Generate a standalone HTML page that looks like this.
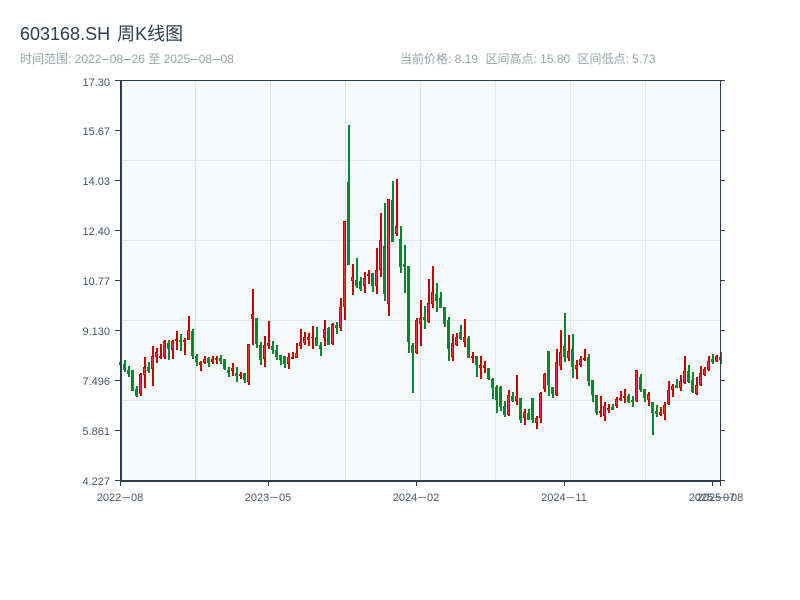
<!DOCTYPE html>
<html><head><meta charset="utf-8"><style>
html,body{margin:0;padding:0;background:#fff;width:800px;height:600px;overflow:hidden}
svg{display:block}
text{font-family:"Liberation Sans","WenQuanYi Zen Hei","Noto Sans CJK SC",sans-serif}
.h{font-size:13.5px;letter-spacing:.4px}
.t{font-size:14px;letter-spacing:1px;fill-opacity:.75}
</style></head><body>
<svg id="s" width="800" height="600" viewBox="0 0 800 600" xmlns="http://www.w3.org/2000/svg">
<text x="20" y="40" font-size="18" fill="#2c3e50">603168.SH <tspan dx="2">周K线图</tspan></text>
<text x="20" y="63" font-size="12" fill="#95a5a6">时间范围: 2022<tspan class="h" dx=".5">–</tspan>08<tspan class="h" dx=".5">–</tspan>26 至 2025<tspan class="h" dx=".5">–</tspan>08<tspan class="h" dx=".5">–</tspan>08</text>
<text x="400" y="63" font-size="12" fill="#95a5a6">当前价格: 8.19</text>
<text x="485.5" y="63" font-size="12" fill="#95a5a6">区间高点: 15.80</text>
<text x="577.5" y="63" font-size="12" fill="#95a5a6">区间低点: 5.73</text>
<rect x="120" y="80" width="600" height="400" fill="#f8f9fa"/>
<g fill="#e2e5e9">
<rect x="195" y="80" width="1" height="400"/><rect x="270" y="80" width="1" height="400"/><rect x="345" y="80" width="1" height="400"/><rect x="420" y="80" width="1" height="400"/><rect x="495" y="80" width="1" height="400"/><rect x="570" y="80" width="1" height="400"/><rect x="645" y="80" width="1" height="400"/>
<rect x="120" y="160" width="600" height="1"/><rect x="120" y="240" width="600" height="1"/><rect x="120" y="320" width="600" height="1"/><rect x="120" y="400" width="600" height="1"/>
</g>
<g id="c"></g>
<g fill="#2c3e50">
<rect x="120" y="80" width="2" height="401"/><rect x="120" y="480" width="601" height="2"/><rect x="120" y="80" width="601" height="1"/><rect x="720" y="80" width="1" height="401"/>
<rect x="115" y="80" width="5" height="1"/><rect x="115" y="130" width="5" height="1"/><rect x="115" y="180" width="5" height="1"/><rect x="115" y="230" width="5" height="1"/><rect x="115" y="280" width="5" height="1"/><rect x="115" y="330" width="5" height="1"/><rect x="115" y="380" width="5" height="1"/><rect x="115" y="430" width="5" height="1"/><rect x="115" y="480" width="5" height="1"/>
<rect x="720" y="80" width="5" height="1"/><rect x="720" y="130" width="5" height="1"/><rect x="720" y="180" width="5" height="1"/><rect x="720" y="230" width="5" height="1"/><rect x="720" y="280" width="5" height="1"/><rect x="720" y="330" width="5" height="1"/><rect x="720" y="380" width="5" height="1"/><rect x="720" y="430" width="5" height="1"/><rect x="720" y="480" width="5" height="1"/>
<rect x="120" y="480" width="1" height="6"/><rect x="268" y="480" width="1" height="6"/><rect x="416" y="480" width="1" height="6"/><rect x="564" y="480" width="1" height="6"/><rect x="712" y="480" width="1" height="6"/><rect x="720" y="480" width="1" height="6"/>
</g>
<g font-size="11" fill="#465666" text-anchor="end">
<text x="110" y="86">17.30</text><text x="110" y="135">15.67</text><text x="110" y="185">14.03</text><text x="110" y="235">12.40</text><text x="110" y="285">10.77</text><text x="110" y="335">9.130</text><text x="110" y="385">7.496</text><text x="110" y="435">5.861</text><text x="110" y="485">4.227</text>
</g>
<g font-size="11" fill="#465666" text-anchor="middle">
<text x="120" y="501">2022<tspan class="t" dx="1">–</tspan>08</text><text x="268" y="501">2023<tspan class="t" dx="1">–</tspan>05</text><text x="416" y="501">2024<tspan class="t" dx="1">–</tspan>02</text><text x="564" y="501">2024<tspan class="t" dx="1">–</tspan>11</text><text x="712" y="501">2025<tspan class="t" dx="1">–</tspan>07</text><text x="720" y="501">2025<tspan class="t" dx="1">–</tspan>08</text>
</g>
</svg>
<script>
var A=[
[280,"g246,254,246,254 g240,276,252,270 g258,290,270,282 g270,333,270,333 g318,351,327,348 r279,348,282,342 r231,324,261,285 g246,279,261,273 r198,318,228,268 r204,249,216,231 r192,237,228,234 r180,237,183,231 g180,240,189,207 r180,237,183,210 r153,210,177,183 g162,213,180,186 r174,225,180,186 r108,180,150,180 g147,237,153,228 g222,258,228,246 r243,273,246,255 r228,252,237,249 g231,261,234,249 r228,252,237,246 r228,252,234,240 g225,252,234,243 g237,270,237,267 g261,291,270,279 r249,288,264,273 g261,306,279,288 r276,297,282,288 g279,309,279,300 r192,315,192,306 r27,195,102,117 g114,204,114,192 g186,255,195,240 r168,261,195,237 r123,207,189,198"],
[240,"g303,342,318,330 g315,360,330,351 g345,375,345,360 g348,384,348,372 r339,387,351,372 r336,357,351,357 r309,354,339,354 r267,327,306,318 r276,315,291,309 r279,318,291,300 r258,327,291,295 g261,318,291,318 g306,348,315,327 r240,318,267,294 g261,315,264,315 r249,315,252,312 g246,282,255,264 r174,273,201,264 r-57,240,-57,201 g-345,75,-174,75 r72,165,111,123 g54,144,120,138 g111,153,123,147 r96,159,114,138 r90,132,102,108 g99,156,99,138 r24,162,90,138 r-81,111,0,90 g-111,183,18,162 r-123,228,-123,192 g-177,5,-120,5 r-183,-12,-42,-18 g-42,99,-3,81 g15,159,72,81 g78,339,78,306 g309,459,315,339 r234,342,240,339 r180,318,234,252 g198,267,231,240 r117,249,190,247"],
[280,"r-42,84,36,72 g9,96,42,63 g36,84,54,84 g81,141,81,132 g111,243,120,207 r162,243,189,231 r159,198,171,195 g135,180,156,177 r117,201,171,186 g168,234,174,234 r216,249,228,234 g228,291,228,255 r228,297,255,264 r243,279,255,264 g264,300,264,297 g294,357,297,324 g315,399,321,360 g318,393,321,381 g363,411,378,405 r330,408,345,405 g336,366,348,363 r285,375,348,363 g354,429,354,420 r387,435,396,414 g387,420,399,420 g354,429,354,420 r408,447,414,429 r336,429,339,414 r279,336,282,327 g213,348,213,315 g321,354,321,342 r207,348,246,345 r150,270,216,258 g99,246,198,231"],
[330,"r15,93,63,84 g12,144,57,111 r90,147,105,117 r78,111,87,105 r57,93,84,90 g72,168,81,153 g150,216,150,195 g195,255,195,249 r198,261,243,249 r216,273,228,258 r222,249,234,240 g222,240,231,240 r201,234,207,228 r183,213,204,210 r177,219,198,204 g192,219,198,216 g198,231,210,216 r120,216,120,213 g132,186,141,180 g177,216,177,204 r186,228,192,210 g216,315,216,249 g225,261,243,252 r231,258,246,255 r216,270,225,252 r153,225,180,222 r162,201,168,180 g147,174,165,174 r135,183,153,174 r78,162,123,159 g105,159,123,156 g126,189,150,186 r141,195,165,192 r108,168,129,165 r111,138,117,135 r78,123,93,120 g72,102,87,96 r75,96,78,93 g66,102,81,90"]
];
var x=120,h="";
function R(x,y,w,hh,f){return '<rect x="'+x+'" y="'+y+'" width="'+w+'" height="'+Math.max(hh,1)+'" fill="'+f+'"/>';}
A.forEach(function(g){
  g[1].split(" ").forEach(function(s){
    var c=s[0],v=s.slice(1).split(",").map(function(n){return Math.round(g[0]+n/3);});
    if(c=="g"){
      h+=R(x,v[0],2,v[1]-v[0],"#008833")+R(x-1,v[2],3,v[3]-v[2],"#008833");
    }else{
      h+=R(x,v[0],2,v[1]-v[0],"#cc0000")+R(x-1,v[2],3,v[3]-v[2],"#cc0000");
      if(v[3]-v[2]>2)h+=R(x,v[2]+1,1,v[3]-v[2]-2,"#ff2a3a");
    }
    x+=4;
  });
});
document.getElementById("c").innerHTML=h;
</script>
</body></html>
